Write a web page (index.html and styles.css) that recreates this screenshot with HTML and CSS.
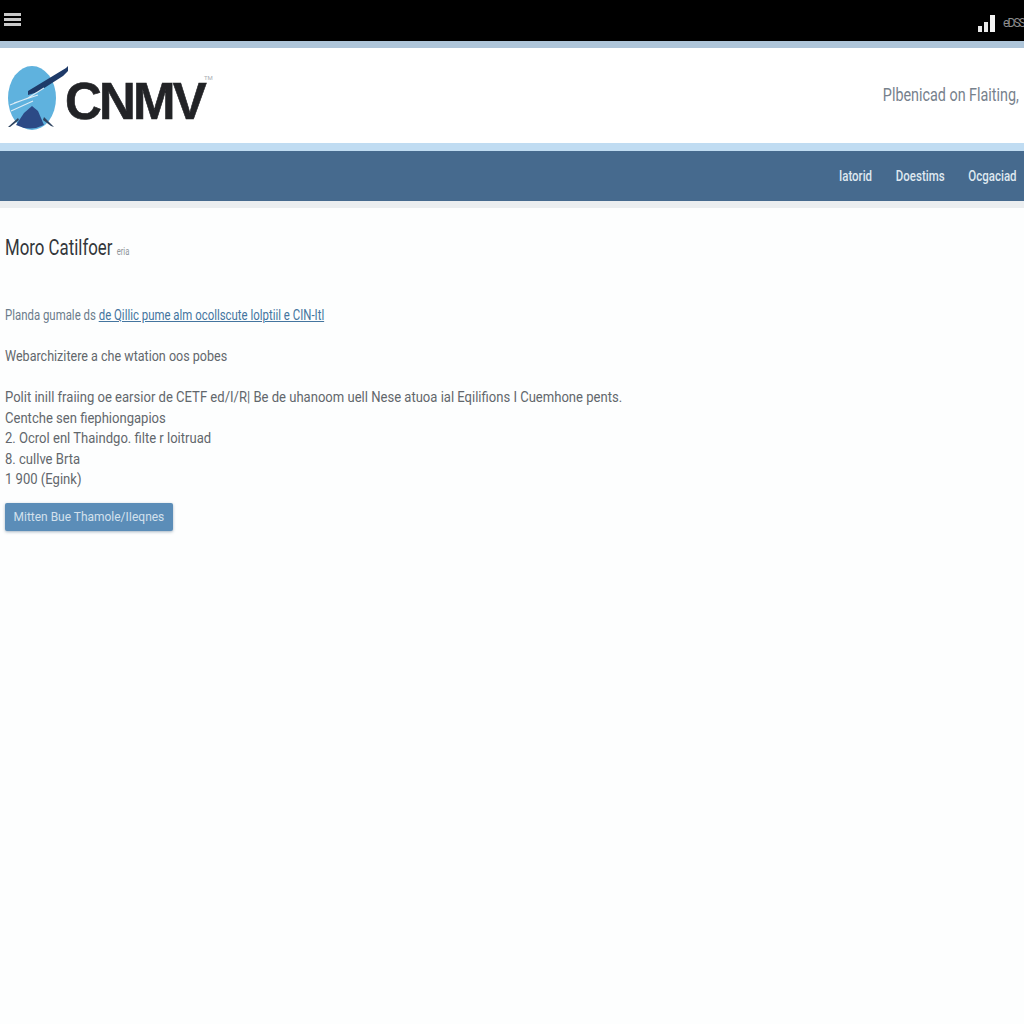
FILE: index.html
```html
<!DOCTYPE html>
<html lang="es">
<head>
<meta charset="utf-8">
<title>CNMV</title>
<link rel="stylesheet" href="styles.css">
</head>
<body>
<header class="topbar">
  <div class="burger"><span></span><span></span><span></span></div>
  <div class="status">
    <svg class="signal" width="18" height="17" viewBox="0 0 18 17"><rect x="0" y="11" width="4" height="6" fill="#e8e8e8"/><rect x="6" y="7" width="4" height="10" fill="#e8e8e8"/><rect x="12" y="0" width="5" height="17" fill="#f4f4f4"/></svg>
    <span class="status-text">eDSS</span>
  </div>
</header>
<div class="band band-top"></div>
<section class="brand">
  <div class="logo">
    <svg class="logo-mark" width="62" height="66" viewBox="0 0 62 66">
      <ellipse cx="24" cy="33" rx="24" ry="32" fill="#5fb2de"/>
      <path d="M8 60 L16 48 L24 41 L30 46 L36 60 Q22 67 8 60Z" fill="#2c4a86"/>
      <path d="M0 62 L10 53 L11 55 L2 62Z" fill="#2f4460"/>
      <path d="M36 52 L46 62 L43 61 L35 55Z" fill="#2f4460"/>
      <path d="M20 26 L58 3 L60 1 L60 6 L55 11 L30 27 L20 30Z" fill="#1e3a68"/>
      <path d="M2 40 L20 33 L36 23 M3 46 L25 36 M6 38 L30 30" fill="none" stroke="#dcecf6" stroke-width="1.1"/>
    </svg>
    <span class="logo-text">CNMV</span>
    <span class="logo-tm">TM</span>
  </div>
  <p class="tagline">Plbenicad on Flaiting,</p>
</section>
<div class="band band-mid"></div>
<nav class="nav">
  <div class="nav-links">
    <a>Iatorid</a>
    <a>Doestims</a>
    <a>Ocgaciad</a>
  </div>
</nav>
<div class="band band-low"></div>
<main class="content">
  <h1 class="title">Moro Catilfoer <small>eria</small></h1>
  <p class="intro">Planda gumale ds <a href="#">de Qillic pume alm ocollscute lolptiil e CIN-Itl</a></p>
  <p class="sub">Webarchizitere a che wtation oos pobes</p>
  <div class="details">
    <p>Polit inill fraiing oe earsior de CETF ed/I/R| Be de uhanoom uell Nese atuoa ial Eqilifions I Cuemhone pents.</p>
    <p>Centche sen fiephiongapios</p>
    <p>2. Ocrol enl Thaindgo. filte r loitruad</p>
    <p>8. cullve Brta</p>
    <p>1 900 (Egink)</p>
  </div>
  <button class="action"><span class="action-label">Mitten Bue Thamole/IIeqnes</span></button>
</main>
</body>
</html>
```
FILE: styles.css
```css
* { box-sizing: border-box; }
html, body { margin: 0; padding: 0; }
body {
  background: #fdfefe;
  font-family: "Roboto", "Liberation Sans", sans-serif;
  color: #4a4f55;
  min-height: 1024px;
}
p, h1 { margin: 0; }

.topbar {
  height: 41px;
  background: #000;
  display: flex;
  align-items: center;
  justify-content: space-between;
  padding: 0 0 0 4px;
}
.burger { display: flex; flex-direction: column; gap: 2px; margin-top: -2px; }
.burger span { display: block; width: 17px; height: 3px; background: #c9c9c9; }
.status { display: flex; align-items: center; gap: 7px; margin-top: 5px; }
.signal { flex: none; }
.status-text { font-size: 12px; color: #8d8d8d; letter-spacing: -1.9px; }

.band { height: 7px; }
.band-top { background: #aec5d9; }
.band-mid { height: 8px; background: #c0dcf2; }
.band-low { background: #ebeef0; }

.brand {
  height: 95px;
  background: #fff;
  display: flex;
  align-items: center;
  justify-content: space-between;
  padding: 0 5px 0 8px;
}
.logo { display: flex; align-items: flex-start; margin-top: 5px; }
.logo-mark { flex: none; }
.logo-text {
  font-family: "Liberation Sans", sans-serif;
  font-weight: 700;
  font-size: 51px;
  line-height: 38px;
  letter-spacing: -2.8px;
  color: #222326;
  margin-left: -5px;
  margin-top: 18px;
  -webkit-text-stroke: .6px #222326;
}
.logo-tm { font-size: 6px; line-height: 8px; color: #a8adb2; margin-top: 9px; }
.tagline {
  font-size: 17.5px;
  color: #77818c;
  margin-top: -2px;
  transform: scaleX(.82);
  transform-origin: right center;
}

.nav {
  height: 50px;
  background: #466a8e;
  display: flex;
  align-items: center;
  justify-content: flex-end;
  padding: 0 7px 0 0;
}
.nav-links {
  display: flex;
  gap: 29px;
  font-size: 14px;
  font-weight: 500;
  color: #dfe8f0;
  transform: scaleX(.82);
  transform-origin: right center;
}

.content { padding: 0 5px; }
.title {
  font-size: 22px;
  font-weight: 400;
  color: #33373b;
  margin-top: 27px;
  line-height: 26px;
  transform: scaleX(.765);
  transform-origin: left center;
}
.title small { font-size: 10px; color: #8f959b; }
.intro {
  font-size: 14.5px;
  line-height: 18px;
  margin-top: 42px;
  color: #6b7c8b;
  transform: scaleX(.787);
  transform-origin: left center;
}
.intro a { color: #44759f; }
.sub {
  font-size: 14.5px;
  line-height: 18px;
  margin-top: 23px;
  color: #62676c;
  transform: scaleX(.865);
  transform-origin: left center;
}
.details {
  margin-top: 22px;
  font-size: 14.5px;
  line-height: 20.5px;
  color: #62676c;
  width: 1000px;
  transform: scaleX(.9);
  transform-origin: left center;
}
.action {
  display: block;
  margin-top: 12px;
  width: 168px;
  height: 28px;
  border: 0;
  border-radius: 2px;
  background: #5b8db8;
  color: #d3e1ed;
  font-family: inherit;
  font-size: 13px;
  white-space: nowrap;
  padding: 0;
  box-shadow: 0 1px 3px rgba(60, 90, 120, .45);
}
.action-label { display: inline-block; transform: scaleX(.92); }
```
